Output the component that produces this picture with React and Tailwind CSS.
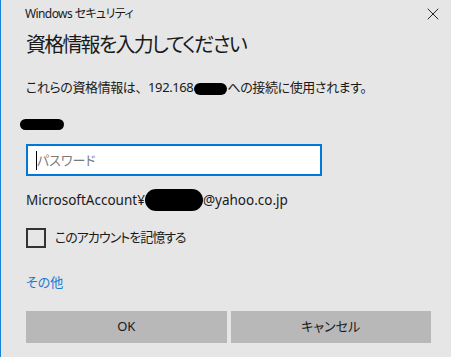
import { X } from "lucide-react";

function Blot({ className }) {
  // redaction scribble
  return <span className={`inline-block bg-black rounded-full align-middle ${className}`} />;
}

export default function App() {
  return (
    <div className="w-[451px] h-[357px] bg-[#e6e6e6] border-l border-[#1883d7] pl-[24px] pr-[20px] text-[#000] font-['Noto_Sans','Noto_Sans_CJK_JP',sans-serif] [font-feature-settings:'palt']">
      {/* title bar */}
      <div className="h-[28px] flex items-center justify-between">
        <span className="text-[12px] tracking-[-0.6px] text-[#1a1a1a]">Windows セキュリティ</span>
        <X size={20} strokeWidth={1.1} className="mr-[-12px] text-[#111]" />
      </div>

      <h1 className="mt-[3px] ml-[1px] leading-[28px] text-[20px] tracking-[-1.8px] text-[#1a1a1a]">資格情報を入力してください</h1>

      <p className="mt-[18px] ml-[1px] leading-[20px] text-[13px] tracking-[-0.4px] text-[#1a1a1a]">
        これらの資格情報は<span className="[font-feature-settings:normal]">、</span>192.168<Blot className="w-[33px] h-[12px] ml-[1px]" />への接続に使用されます。
      </p>

      <div className="mt-[22px] ml-[-5px] w-[44px] h-[11px] bg-black rounded-full" />

      <div className="relative mt-[14px] ml-[1px] w-[296px] h-[32px] border-2 border-[#0078d7] bg-white">
        <input type="password" placeholder="パスワード" className="w-full h-full pl-[9px] text-[13px] outline-none caret-transparent placeholder:text-[#7a7a7a]" />
        <span className="absolute left-[8px] top-[5px] w-[1px] h-[19px] bg-black" />
      </div>

      <p className="mt-[13px] ml-[1px] leading-[20px] text-[13.5px] text-[#1a1a1a] flex items-center">
        MicrosoftAccount¥<Blot className="w-[58px] h-[22px] rounded-[10px]" />@yahoo.co.jp
      </p>

      <label className="mt-[17px] ml-[1px] h-[20px] flex items-center gap-[9px]">
        <span className="w-[20px] h-[20px] border-2 border-[#333] bg-transparent" />
        <span className="text-[13px] tracking-[-1px] text-[#1a1a1a]">このアカウントを記憶する</span>
      </label>

      <div className="mt-[24px] ml-[1px] leading-[20px] text-[13px] text-[#1a79d0]">その他</div>

      <div className="mt-[19px] ml-[1px] grid grid-cols-2 gap-[4px]">
        <button className="h-[32px] bg-[#b8b8b8] text-[13px] text-[#1a1a1a]">OK</button>
        <button className="h-[32px] bg-[#b8b8b8] text-[13px] text-[#1a1a1a]">キャンセル</button>
      </div>
    </div>
  );
}
